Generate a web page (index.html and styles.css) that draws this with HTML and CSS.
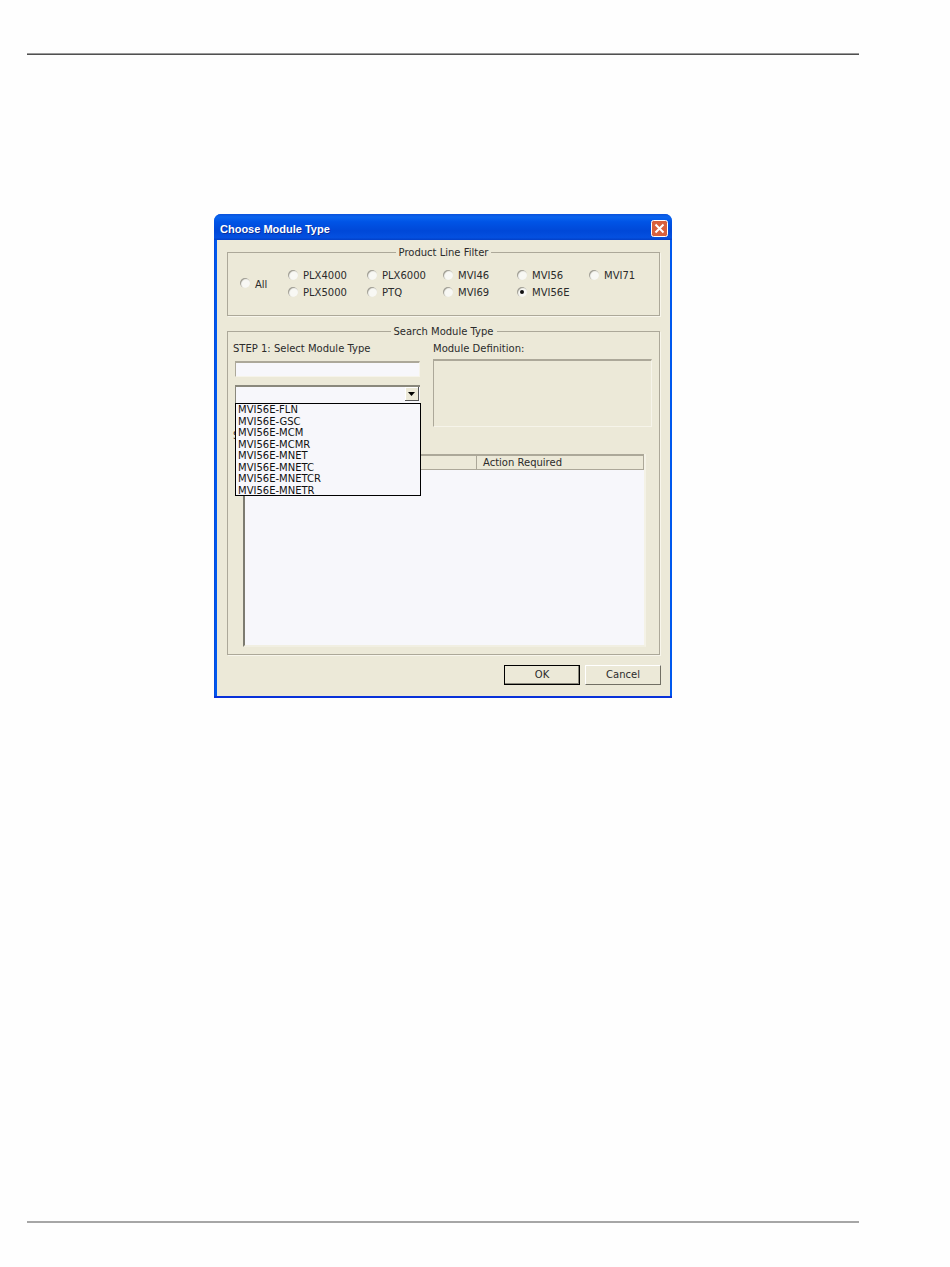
FILE: index.html
```html
<!DOCTYPE html>
<html lang="en">
<head>
<meta charset="utf-8">
<title>Choose Module Type</title>
<link rel="stylesheet" href="styles.css">
</head>
<body>
<div class="page">
  <div class="rule-top"></div>
  <div class="dialog">
    <div class="titlebar">
      <span class="title">Choose Module Type</span>
      <svg class="close" width="17" height="17" viewBox="0 0 17 17">
        <rect x="0.5" y="0.5" width="16" height="16" rx="2" fill="#d8603c" stroke="#fff"/>
        <path d="M4.5 4.5l8 8M12.5 4.5l-8 8" stroke="#fff" stroke-width="2"/>
      </svg>
    </div>
    <div class="body">
      <div class="group filter">
        <span class="legend">Product Line Filter</span>
        <label class="opt all"><span class="radio"></span>All</label>
        <label class="opt"><span class="radio"></span>PLX4000</label>
        <label class="opt"><span class="radio"></span>PLX6000</label>
        <label class="opt"><span class="radio"></span>MVI46</label>
        <label class="opt"><span class="radio"></span>MVI56</label>
        <label class="opt"><span class="radio"></span>MVI71</label>
        <label class="opt"><span class="radio"></span>PLX5000</label>
        <label class="opt"><span class="radio"></span>PTQ</label>
        <label class="opt"><span class="radio"></span>MVI69</label>
        <label class="opt"><span class="radio checked"></span>MVI56E</label>
      </div>
      <div class="group search">
        <span class="legend">Search Module Type</span>
        <div class="columns">
          <div class="left">
            <div class="lbl">STEP 1: Select Module Type</div>
            <div class="input"></div>
            <div class="combo">
              <span class="combo-btn"><svg width="7" height="4" viewBox="0 0 7 4"><path d="M0 0h7L3.5 4z" fill="#000"/></svg></span>
              <ul class="list">
                <li>MVI56E-FLN</li>
                <li>MVI56E-GSC</li>
                <li>MVI56E-MCM</li>
                <li>MVI56E-MCMR</li>
                <li>MVI56E-MNET</li>
                <li>MVI56E-MNETC</li>
                <li>MVI56E-MNETCR</li>
                <li>MVI56E-MNETR</li>
              </ul>
            </div>
            <div class="lbl step2">S</div>
          </div>
          <div class="right">
            <div class="lbl">Module Definition:</div>
            <div class="defbox"></div>
          </div>
        </div>
        <div class="table">
          <div class="thead">
            <span class="th first"></span>
            <span class="th">Action Required</span>
          </div>
          <div class="tbody"></div>
        </div>
      </div>
      <div class="buttons">
        <span class="btn default">OK</span>
        <span class="btn">Cancel</span>
      </div>
    </div>
  </div>
  <div class="rule-bottom"></div>
</div>
</body>
</html>
```
FILE: styles.css
```css
* { box-sizing: border-box; }
html, body { margin: 0; padding: 0; }
body {
  background: #fefefe;
  font-family: "DejaVu Sans", sans-serif;
  font-size: 10px;
  color: #2b2b2b;
}
.page {
  height: 1267px;
  overflow: hidden;
  display: flex;
  flex-direction: column;
  padding: 0 91px 0 27px;
}
.rule-top {
  margin-top: 53px;
  height: 2px;
  background: linear-gradient(#9a9a9a 50%, #505050 50%);
}
.rule-bottom {
  margin-top: auto;
  margin-bottom: 44px;
  height: 2px;
  background: #a6a6a6;
}
.dialog {
  margin: 159px 0 0 187px;
  width: 458px;
  height: 484px;
  border-radius: 7px 7px 0 0;
  background: linear-gradient(90deg, #0a3fd0 0, #0058ee 1px, #0058ee 100%);
  display: flex;
  flex-direction: column;
  border-bottom: 2px solid #0831d9;
}
.titlebar {
  height: 26px;
  flex: none;
  border-radius: 7px 7px 0 0;
  background: linear-gradient(#0a52dc 0, #0a64ee 12%, #0054e6 30%, #0048d8 65%, #0450e0 90%, #0340c8 100%);
  display: flex;
  align-items: center;
  justify-content: space-between;
  padding: 3px 4px 0 6px;
}
.title {
  color: #fff;
  font-family: "Liberation Sans", sans-serif;
  font-weight: bold;
  font-size: 11px;
  text-shadow: 1px 1px 0 #0a2f9a;
}
.body {
  margin: 0 2px 0 3px;
  height: 456px;
  background: #ece9d8;
  padding: 12px 10px 0;
  display: flex;
  flex-direction: column;
}
.group {
  position: relative;
  border: 1px solid #aca899;
  box-shadow: 1px 1px 0 #f8f6ec;
}
.legend {
  position: absolute;
  top: -6px;
  left: 50%;
  transform: translateX(-50%);
  padding: 0 3px;
  background: #ece9d8;
  line-height: 12px;
  white-space: nowrap;
}
.filter {
  height: 64px;
  display: grid;
  grid-template-columns: 48px 79px 76px 74px 72px 1fr;
  grid-auto-rows: 17px;
  align-items: center;
  padding: 14px 0 0 12px;
}
.all { grid-row: span 2; }
.opt {
  display: flex;
  align-items: center;
  gap: 5px;
  white-space: nowrap;
}
.radio {
  width: 10px;
  height: 10px;
  margin-top: -2px;
  border-radius: 50%;
  background: #f8f8f4;
  box-shadow: inset 1px 1px 1px #9a988c;
  display: flex;
  align-items: center;
  justify-content: center;
  flex: none;
}
.checked::after {
  content: "";
  width: 4px;
  height: 4px;
  border-radius: 50%;
  background: #111;
}
.search {
  margin-top: 15px;
  height: 324px;
  padding: 11px 0 0 5px;
}
.columns {
  display: flex;
  gap: 12px;
}
.left { width: 188px; }
.right { width: 219px; }
.lbl { line-height: 12px; height: 12px; white-space: nowrap; }
.input {
  margin: 6px 0 0 2px;
  width: 185px;
  height: 16px;
  background: #f7f7fb;
  border: 1px solid #f6f4ea;
  border-top: 2px solid #aca899;
  border-left: 1px solid #aca899;
}
.combo {
  position: relative;
  margin: 8px 0 0 2px;
  width: 185px;
  height: 18px;
  background: #f7f7fb;
  border-top: 2px solid #8a887c;
  border-left: 1px solid #8a887c;
  display: flex;
  justify-content: flex-end;
  align-items: flex-start;
  padding: 0 1px 0 0;
}
.combo-btn {
  width: 14px;
  height: 14px;
  background: #ece9d8;
  border-right: 1px solid #555;
  border-bottom: 1px solid #555;
  box-shadow: inset 1px 1px 0 #fff;
  display: flex;
  align-items: center;
  justify-content: center;
}
.list {
  position: absolute;
  z-index: 2;
  top: 16px;
  left: -1px;
  width: 186px;
  height: 93px;
  margin: 0;
  padding: 0 0 0 2px;
  list-style: none;
  background: #f7f7fb;
  border: 1px solid #000;
  color: #111;
}
.list li { height: 11.5px; line-height: 11.5px; white-space: nowrap; }
.step2 { margin-top: 27px; }
.defbox {
  margin-top: 4px;
  height: 68px;
  background: #ece9d8;
  border: 1px solid #f6f4ea;
  border-top: 2px solid #aca899;
  border-left: 1px solid #aca899;
}
.table {
  margin: 12px 0 0 10px;
  width: 403px;
  height: 193px;
  display: flex;
  flex-direction: column;
  border-left: 2px solid #7d7b70;
  border-right: 2px solid #f4f2e6;
  border-bottom: 2px solid #f1efe2;
}
.thead {
  height: 16px;
  flex: none;
  display: flex;
  background: #ece9d8;
  border-top: 2px solid #aca899;
  border-bottom: 1px solid #aca899;
  border-right: 1px solid #aca899;
}
.th { line-height: 14px; padding-left: 6px; }
.first { width: 232px; flex: none; border-right: 1px solid #aca899; }
.tbody { flex: 1; background: #f7f7fb; }
.buttons {
  margin: 10px -1px 0 0;
  display: flex;
  justify-content: flex-end;
  gap: 5px;
}
.btn {
  width: 76px;
  height: 20px;
  line-height: 18px;
  text-align: center;
  background: #ece9d8;
  border: 1px solid;
  border-color: #fff #716f64 #716f64 #fff;
}
.default {
  border-color: #000;
  box-shadow: inset -1px -1px 0 #8a887c;
}
```
